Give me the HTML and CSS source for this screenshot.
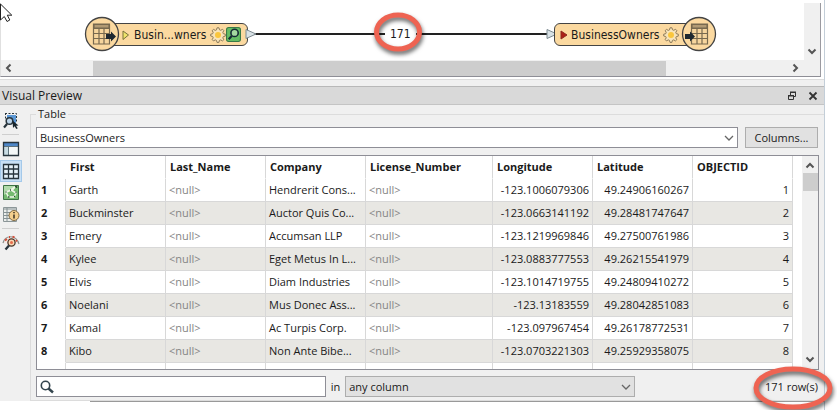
FILE: index.html
```html
<!DOCTYPE html>
<html lang="en">
<head>
<meta charset="utf-8">
<title>Visual Preview</title>
<link rel="stylesheet" href="styles.css">
</head>
<body>
<div class="app">
  <section class="workspace" aria-label="Workspace canvas">
    <div class="canvas-row">
      <div class="canvas">
        <svg class="wire" width="310" height="10" viewBox="0 0 310 10" aria-hidden="true"><path d="M0 5H310" stroke="#222" stroke-width="2"/></svg>
        <span class="feature-count">171</span>
        <div class="node reader">
          <svg width="8" height="12" viewBox="0 0 8 12"><path d="M1 2L6.500 6L1 10.500Z" fill="#eee36a" stroke="#77713b"/></svg>
          <span>Busin...wners</span>
          <svg class="gear" width="16" height="16" viewBox="0 0 16 16"><use href="#gear"/></svg>
          <svg width="15" height="15" viewBox="0 0 14 14"><rect x=".5" y=".5" width="13" height="13" rx="2" fill="#65bd63" stroke="#397947"/><circle cx="8" cy="5.500" r="3.400" fill="#a5d9a0" stroke="#172b35" stroke-width="1.500"/><path d="M5.300 8.400L2.500 11.500" stroke="#172b35" stroke-width="2"/></svg>
        </div>
        <svg class="badge reader-badge" width="36" height="36" viewBox="0 0 36 36"><circle cx="18" cy="18" r="16.500" fill="#fbd9a0" stroke="#444" stroke-width="1.300"/><g fill="none" stroke="#77694f" stroke-width="1.200"><path d="M9.500 8h16v20h-16z" fill="#f6d59d"/><path d="M10 8.500h15v3.500H10z" fill="#b19a74"/><path d="M9.500 12.500h16M9.500 17.500h16M9.500 22.500h16M15 12v16M20 12v16"/></g><path d="M22 18h5v-2.500l5 5-5 5V23h-5z" fill="#1e2830"/></svg>
        <svg class="port out-port" width="12" height="12" viewBox="0 0 12 12"><use href="#port"/></svg>
        <svg class="port in-port" width="12" height="12" viewBox="0 0 12 12"><use href="#port"/></svg>
        <div class="node writer">
          <svg width="8" height="12" viewBox="0 0 8 12"><path d="M1 2L7 6L1 10Z" fill="#ad2017" stroke="#8d2a21"/></svg>
          <span>BusinessOwners</span>
          <svg class="gear" width="16" height="16" viewBox="0 0 16 16"><use href="#gear"/></svg>
        </div>
        <svg class="badge writer-badge" width="36" height="36" viewBox="0 0 36 36"><circle cx="18" cy="18" r="16.500" fill="#fbd9a0" stroke="#444" stroke-width="1.300"/><g fill="none" stroke="#77694f" stroke-width="1.200"><path d="M10.500 8h16v20h-16z" fill="#f6d59d"/><path d="M11 8.500h15v3.500H11z" fill="#b19a74"/><path d="M10.500 12.500h16M10.500 17.500h16M10.500 22.500h16M16 12v16M21 12v16"/></g><path d="M4 18h5v-2.500l5 5-5 5V23H4z" fill="#1e2830"/></svg>
        <svg class="cursor" width="16" height="22" viewBox="0 0 16 22"><path d="M.5 1v16l3.800-3.500 2.700 5 2.800-1.500-2.500-4.800h4.500z" fill="#fff" stroke="#222"/></svg>
        <svg class="callout count-callout" width="54" height="48" viewBox="0 0 54 48"><ellipse cx="26" cy="21" rx="21.500" ry="17" fill="none" stroke="#ee6352" stroke-width="5"/></svg>
      </div>
      <div class="vbar canvas-vbar"><svg width="10" height="10" viewBox="0 0 10 10"><path d="M1.500 3.500L5 7l3.500-3.500"/></svg></div>
    </div>
    <div class="hbar">
      <svg width="10" height="10" viewBox="0 0 10 10"><path d="M6.500 1.500L3 5l3.500 3.500"/></svg>
      <span class="thumb"></span>
      <svg width="10" height="10" viewBox="0 0 10 10"><path d="M3.500 1.500L7 5L3.500 8.500"/></svg>
    </div>
  </section>

  <section class="dock">
    <header class="dock-title">
      <h1>Visual Preview</h1>
      <button type="button" aria-label="Float"><svg width="10" height="10" viewBox="0 0 10 10" fill="none" stroke="#333"><path d="M3.500 4V1.500h5v4H7M3 1.500h6M1 4.500h6M1.500 4v4.500h5V4M3 1h6M1 5h6"/></svg></button>
      <button type="button" aria-label="Close"><svg width="10" height="10" viewBox="0 0 10 10" fill="none" stroke="#333" stroke-width="1.800"><path d="M1.500 1.500l7 7M8.500 1.500l-7 7"/></svg></button>
    </header>
    <div class="dock-body">
      <nav class="tools" aria-label="Preview tools">
        <button type="button" aria-label="Select"><svg width="18" height="18" viewBox="0 0 18 18" fill="none"><path d="M5 3h9v8H5z" fill="#5b97d5"/><path d="M3 1.500h11.500V11M3.500 1v7" stroke="#27343c" stroke-dasharray="2 1.500"/><circle cx="7.500" cy="9" r="3.300" fill="#bbd3e8" stroke="#27343c" stroke-width="1.500"/><path d="M5 12L2 15.500" stroke="#27343c" stroke-width="2.200"/><path d="M10.500 8.500l6 5-2.500.2 1.800 2.600-1.500.8-1.700-2.800-1.600 1.700z" fill="#17242c"/></svg></button>
        <hr>
        <button type="button" aria-label="Display control"><svg width="18" height="18" viewBox="0 0 18 18" fill="none"><path d="M1.500 2.500h15v13h-15z" fill="#f4f8f8"/><path d="M2 3h14v3H2z" fill="#4e87c8"/><path d="M2 6h4v9H2z" fill="#c9dce3"/><path d="M6.500 6v9M2 6.500h14" stroke="#60747d"/><path d="M1.500 2.500h15v13h-15z" stroke="#27343c" stroke-width="1.300"/></svg></button>
        <button type="button" class="active" aria-label="Table" aria-pressed="true"><svg width="18" height="18" viewBox="0 0 18 18" fill="none"><path d="M1.500 2.500h15v14h-15zM2 7h14M2 12h14M6.500 3v13M11.500 3v13" fill="#e5f1f8" stroke="#27343c" stroke-width="1.300"/></svg></button>
        <button type="button" aria-label="Graphics"><svg width="18" height="18" viewBox="0 0 18 18" fill="none"><path d="M1.500 1.500h15v14h-15z" fill="#75ba70" stroke="#3e7444"/><path d="M2 2h14L2 11z" fill="#b1dbab"/><path d="M13 3L8 6.500 4 8l2.500 5H12l2-4-4-2.500z" stroke="#eff7e8" stroke-width="1.600"/><path d="M13 2.500h1.500V4M8 6h1M3.500 8h1M6 13h1.500M12 12.500h1M13.500 8.500h1" stroke="#2f5036" stroke-width="1.500"/></svg></button>
        <button type="button" aria-label="Feature information"><svg width="18" height="18" viewBox="0 0 18 18" fill="none"><path d="M1.500 1.500h13v14h-13z" fill="#eceeec" stroke="#8c9698"/><path d="M2 3h12M2 6.500h12M2 9.500h9M2 12.500h8M5 2v13" stroke="#859194"/><circle cx="12" cy="9.500" r="5" fill="#f4cf8d" stroke="#826b43"/><path d="M12 8.500v4M12 6v1.300" stroke="#4d422e" stroke-width="1.700"/></svg></button>
        <hr>
        <button type="button" aria-label="Inspect"><svg width="18" height="18" viewBox="0 0 18 18" fill="none"><path d="M1 9C3 1 14 0 17 10" fill="#f5e9e4" stroke="#8b8f8d" stroke-width="1.200"/><path d="M3 6.500l2-1.500M7 3h1M10.500 2.500l2 .8M14 6l1 1.500" stroke="#d64b36" stroke-width="1.800"/><circle cx="9.500" cy="8.500" r="3.600" fill="#f9d8b4" stroke="#4a3529" stroke-width="1.300"/><circle cx="9.500" cy="8.500" r="1.500" fill="#e76b4c"/><path d="M7 11.500L3.500 15.500" stroke="#27343c" stroke-width="2.300"/></svg></button>
      </nav>
      <fieldset class="group">
        <legend>Table</legend>
        <div class="picker">
          <div class="select-wrap feature-select">
            <select aria-label="Feature type"><option>BusinessOwners</option></select>
            <svg width="10" height="8" viewBox="0 0 10 8"><path d="M1 2l4 4 4-4"/></svg>
          </div>
          <button type="button" class="columns">Columns...</button>
        </div>
        <div class="grid">
          <div class="grid-view">
            <table>
              <colgroup><col class="c-index"><col><col><col><col class="c-license"><col><col><col></colgroup>
              <thead><tr><th></th><th scope="col">First</th><th scope="col">Last_Name</th><th scope="col">Company</th><th scope="col">License_Number</th><th scope="col">Longitude</th><th scope="col">Latitude</th><th scope="col">OBJECTID</th></tr></thead>
              <tbody>
                <tr><th scope="row">1</th><td>Garth</td><td class="null">&lt;null&gt;</td><td>Hendrerit Cons...</td><td class="null">&lt;null&gt;</td><td class="num">-123.1006079306</td><td class="num">49.24906160267</td><td class="num">1</td></tr>
                <tr><th scope="row">2</th><td>Buckminster</td><td class="null">&lt;null&gt;</td><td>Auctor Quis Co...</td><td class="null">&lt;null&gt;</td><td class="num">-123.0663141192</td><td class="num">49.28481747647</td><td class="num">2</td></tr>
                <tr><th scope="row">3</th><td>Emery</td><td class="null">&lt;null&gt;</td><td>Accumsan LLP</td><td class="null">&lt;null&gt;</td><td class="num">-123.1219969846</td><td class="num">49.27500761986</td><td class="num">3</td></tr>
                <tr><th scope="row">4</th><td>Kylee</td><td class="null">&lt;null&gt;</td><td>Eget Metus In L...</td><td class="null">&lt;null&gt;</td><td class="num">-123.0883777553</td><td class="num">49.26215541979</td><td class="num">4</td></tr>
                <tr><th scope="row">5</th><td>Elvis</td><td class="null">&lt;null&gt;</td><td>Diam Industries</td><td class="null">&lt;null&gt;</td><td class="num">-123.1014719755</td><td class="num">49.24809410272</td><td class="num">5</td></tr>
                <tr><th scope="row">6</th><td>Noelani</td><td class="null">&lt;null&gt;</td><td>Mus Donec Ass...</td><td class="null">&lt;null&gt;</td><td class="num">-123.13183559</td><td class="num">49.28042851083</td><td class="num">6</td></tr>
                <tr><th scope="row">7</th><td>Kamal</td><td class="null">&lt;null&gt;</td><td>Ac Turpis Corp.</td><td class="null">&lt;null&gt;</td><td class="num">-123.097967454</td><td class="num">49.26178772531</td><td class="num">7</td></tr>
                <tr><th scope="row">8</th><td>Kibo</td><td class="null">&lt;null&gt;</td><td>Non Ante Bibe...</td><td class="null">&lt;null&gt;</td><td class="num">-123.0703221303</td><td class="num">49.25929358075</td><td class="num">8</td></tr>
                <tr><th></th><td></td><td></td><td></td><td></td><td></td><td></td><td></td></tr>
              </tbody>
            </table>
          </div>
          <div class="vbar grid-vbar">
            <svg width="10" height="10" viewBox="0 0 10 10"><path d="M1.500 6.500L5 3l3.500 3.500"/></svg>
            <span class="thumb"></span>
            <svg width="10" height="10" viewBox="0 0 10 10"><path d="M1.500 3.500L5 7l3.500-3.500"/></svg>
          </div>
        </div>
        <div class="filter">
          <label class="search"><svg width="14" height="14" viewBox="0 0 14 14" fill="none" stroke="#33444d"><circle cx="5.500" cy="5.500" r="4.200" stroke-width="1.600"/><path d="M8.500 8.500L13 12.500" stroke-width="2.400"/></svg><input type="text" aria-label="Search"></label>
          <label for="column">in</label>
          <div class="select-wrap column-select">
            <select id="column"><option>any column</option></select>
            <svg width="10" height="8" viewBox="0 0 10 8"><path d="M1 2l4 4 4-4"/></svg>
          </div>
          <output class="rows">171 row(s)<svg class="callout rows-callout" width="88" height="54" viewBox="0 0 88 54"><ellipse cx="42" cy="23" rx="37" ry="19" fill="none" stroke="#ee6352" stroke-width="5"/></svg></output>
        </div>
      </fieldset>
    </div>
  </section>
  <div class="next-pane"></div>
</div>
<svg class="defs" width="0" height="0" aria-hidden="true"><defs>
  <path id="port" d="M1 1.500L11 6L1 10.500Z" fill="#d9e2e6" stroke="#7d8a90"/>
  <g id="gear"><path d="M7 .8h2l.5 2 1.200.5 1.900-1 1.200 1.300-1 1.800.5 1.300 2 .5v1.900l-2 .5-.5 1.300 1 1.800-1.300 1.200-1.800-1-1.300.5-.5 2H7l-.5-2-1.200-.5-1.900 1-1.200-1.300 1-1.800-.5-1.300-2-.5V7.200l2-.5.5-1.300-1-1.800 1.300-1.200 1.800 1 1.200-.5z" fill="#f8e4b9" stroke="#8c7a5a"/><circle cx="8" cy="8" r="3" fill="#fac63d"/></g>
</defs></svg>
</body>
</html>
```
FILE: styles.css
```css
* { box-sizing: border-box; }
body { margin: 0; background: #fff; overflow: hidden; color: #1a1a1a; font: 11px/16px "Open Sans", "Noto Sans", sans-serif; }
button, input, select { font: inherit; color: inherit; margin: 0; }
button { padding: 0; border: 0; background: none; }
svg { display: block; flex: none; }
.defs { position: absolute; }
.app { margin-right: 12px; padding-top: 3px; border-right: 1px solid #c3ced8; }

.workspace { margin-right: 3px; border-right: 1px solid #9a9aa0; border-bottom: 1px solid #8e8e96; border-left: 1px solid #e0e0e0; }
.canvas-row { display: flex; height: 57px; }
.canvas { position: relative; flex: 1; font: 12px/16px "DejaVu Sans Condensed", sans-serif; }
.node { position: absolute; top: 20px; height: 23px; display: flex; align-items: center; border: 1px solid #444; border-radius: 6px; background: #fbd9a0; }
.reader { left: 100px; width: 147px; padding-left: 20px; gap: 4px; }
.reader .gear { margin-right: -4px; }
.writer { left: 553px; width: 146px; padding-left: 5px; gap: 3px; }
.badge, .port, .wire, .feature-count, .cursor, .callout { position: absolute; }
.badge { top: 13px; }
.reader-badge { left: 83px; }
.writer-badge { left: 680px; }
.port { top: 25px; }
.out-port { left: 244px; }
.in-port { left: 545px; }
.wire { left: 245px; top: 26px; }
.feature-count { left: 384px; top: 23px; padding: 0 5px; background: #fff; }
.cursor { left: -1px; top: 0; }
.callout { filter: drop-shadow(1px 3px 2px rgba(0, 0, 0, .6)); }
.count-callout { left: 371px; top: 8px; }

.vbar, .hbar { display: flex; background: #f0f0f0; fill: none; stroke: #555; stroke-width: 2; }
.vbar { flex: none; flex-direction: column; align-items: center; width: 16px; }
.canvas-vbar { justify-content: flex-end; padding-bottom: 4px; }
.hbar { align-items: center; height: 16px; padding: 0 20px 0 3px; }
.hbar .thumb { flex: none; width: 72%; height: 15px; margin-left: 79px; margin-right: auto; }
.thumb { background: #cdcdcd; }

.dock { margin-top: 2px; padding-top: 6px; border-top: 1px solid #dcdcdc; background: #f0f0f0; }
.dock-title { display: flex; align-items: center; gap: 11px; height: 19px; padding: 0 6px 0 2px; background: #d9d9d9; border-top: 1px solid #b8b8b8; border-bottom: 1px solid #c4c4c4; }
.dock-title h1 { flex: 1; margin: 0; font: inherit; font-size: 12px; }
.dock-body { display: flex; }
.tools { flex: none; width: 30px; padding-top: 5px; }
.tools button { display: flex; width: 22px; height: 22px; align-items: center; justify-content: center; }
.tools .active { background: #c9e0f5; border: 1px solid #a4c9ea; }
.tools hr { width: 17px; height: 1px; margin: 2px 0 3px 2px; border: 0; background: #cfcfcf; }
.group { flex: 1; min-width: 0; margin: 0; padding: 4px 5px 3px 5px; border: 1px solid #dcdcdc; border-right: 0; }
.group legend { padding: 0 2px; line-height: 18px; }
.picker { display: flex; gap: 7px; margin-bottom: 7px; }
.select-wrap { position: relative; }
.select-wrap select { display: block; width: 100%; height: 21px; padding: 0 3px; border: 1px solid #8e8e96; border-radius: 0; background: #fff; appearance: none; }
.select-wrap svg { position: absolute; right: 4px; top: 7px; fill: none; stroke: #666; stroke-width: 1.3; pointer-events: none; }
.feature-select { flex: 1; }
.columns { width: 73px; height: 21px; margin-right: 1px; border: 1px solid #adadad; background: #e1e1e1; }

.grid { display: flex; height: 215px; border: 1px solid #8e8e96; background: #fff; }
.grid-view { flex: 1; min-width: 0; overflow: hidden; }
.grid-vbar { padding: 5px 0; }
.grid-vbar .thumb { width: 15px; height: 18px; margin: 2px 0 auto; }
table { width: 756px; table-layout: fixed; border-collapse: separate; border-spacing: 0; }
.c-index { width: 29px; }
.c-license { width: 127px; }
th, td { height: 23px; padding: 0 3px; border-right: 1px solid #d8d8d8; border-bottom: 1px solid #d8d8d8; text-align: left; white-space: nowrap; overflow: hidden; }
thead th { border-bottom-color: #fff; padding-left: 4px; }
thead th:first-child { border-right-color: #fff; }
tbody th { border-bottom-color: #fff; padding-left: 4px; }
tbody tr:nth-child(even) td { background: #e8e7e3; }
.null { color: #858585; }
.num { text-align: right; }

.filter { display: flex; align-items: center; gap: 5px; margin-top: 6px; }
.search { display: flex; align-items: center; width: 37%; height: 21px; padding-left: 3px; border: 1px solid #8e8e96; background: #fff; }
.search input { flex: 1; min-width: 0; border: 0; outline: 0; padding: 0 4px; background: none; }
.column-select { width: 37%; }
.column-select select { background: #e1e1e1; border-color: #adadad; }
.rows { position: relative; margin-left: auto; margin-right: 1px; }
.rows-callout { right: -21px; top: -14px; }
.next-pane { height: 9px; margin-left: 90px; border-top: 1px solid #999; }
```
